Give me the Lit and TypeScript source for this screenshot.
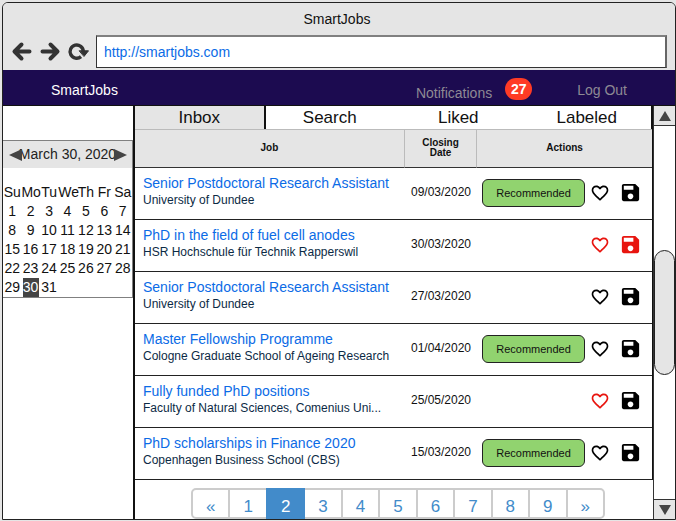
import { LitElement, html, css, svg } from "lit";
import { customElement, property, state } from "lit/decorators.js";
import { classMap } from "lit/directives/class-map.js";

interface Job {
  title: string;
  place: string;
  closing: string;
  recommended: boolean;
  liked: boolean;
  saved: boolean;
}

const JOBS: Job[] = [
  { title: "Senior Postdoctoral Research Assistant", place: "University of Dundee", closing: "09/03/2020", recommended: true, liked: false, saved: false },
  { title: "PhD in the field of fuel cell anodes", place: "HSR Hochschule für Technik Rapperswil", closing: "30/03/2020", recommended: false, liked: true, saved: true },
  { title: "Senior Postdoctoral Research Assistant", place: "University of Dundee", closing: "27/03/2020", recommended: false, liked: false, saved: false },
  { title: "Master Fellowship Programme", place: "Cologne Graduate School of Ageing Research", closing: "01/04/2020", recommended: true, liked: false, saved: false },
  { title: "Fully funded PhD positions", place: "Faculty of Natural Sciences, Comenius Uni...", closing: "25/05/2020", recommended: false, liked: true, saved: false },
  { title: "PhD scholarships in Finance 2020", place: "Copenhagen Business School (CBS)", closing: "15/03/2020", recommended: true, liked: false, saved: false },
];

const reset = css`
  * { box-sizing: border-box; }
  button {
    font: inherit;
    color: inherit;
    background: none;
    border: 0;
    padding: 0;
    cursor: pointer;
  }
  a { text-decoration: none; color: inherit; }
  svg { display: block; }
`;

/* Browser frame: title, history buttons and address box. */
@customElement("browser-bar")
export class BrowserBar extends LitElement {
  static styles = [reset, css`
    :host { display: block; background: #e5e5e5; padding-bottom: 2px; }
    .title { height: 32px; line-height: 32px; text-align: center; padding-right: 4px; color: #111; }
    .tools { display: flex; align-items: center; padding: 0 8px; }
    .nav { width: 22px; height: 22px; margin-right: 6px; }
    .icon { width: 22px; height: 22px; fill: none; stroke: #333; stroke-width: 4; stroke-linecap: round; stroke-linejoin: round; }
    .ring { stroke-width: 3.4; stroke-linecap: butt; }
    .tip { fill: #333; stroke-width: 1; }
    .address {
      flex: 1;
      min-width: 0;
      height: 33px;
      margin-left: 1px;
      font: inherit;
      color: #0b6be6;
      border: 1px solid #333;
      border-top: 2px solid #808080;
      border-right: 2px solid #666;
      padding: 0 7px;
      background: #fff;
      outline: 0;
    }
  `];

  render() {
    return html`
      <div class="title">SmartJobs</div>
      <div class="tools">
        <button class="nav" aria-label="Back">
          <svg class="icon" viewBox="0 0 22 22">${svg`<path d="M18.5 10.500H3.500M10.500 3.500L3.500 10.500l7 7"/>`}</svg>
        </button>
        <button class="nav" aria-label="Forward">
          <svg class="icon" viewBox="0 0 22 22">${svg`<path d="M3.500 10.500h15M11.500 3.500l7 7-7 7"/>`}</svg>
        </button>
        <button class="nav" aria-label="Reload">
          <svg class="icon" viewBox="0 0 22 22">${svg`<path class="ring" d="M14 15.600A6.600 6.600 0 1 1 16.300 10.500"/><path class="tip" d="M12.500 9.800h9L17.200 15.200z"/>`}</svg>
        </button>
        <input class="address" type="text" aria-label="Address" value="http://smartjobs.com" />
      </div>
    `;
  }
}

/* Month view with the chosen day marked. */
@customElement("month-calendar")
export class MonthCalendar extends LitElement {
  @property({ type: Number }) selected = 30;

  static styles = [reset, css`
    :host { display: block; border: 1px solid #808080; border-left: 0; background: #fff; }
    .head { position: relative; height: 27px; line-height: 27px; background: #e5e5e5; text-align: center; white-space: nowrap; color: #222; }
    .step { position: absolute; top: 8px; width: 13px; height: 12px; }
    .step svg { width: 13px; height: 12px; fill: #444; }
    .prev { left: 6px; }
    .next { right: 5px; }
    .days { width: 100%; table-layout: fixed; border-collapse: collapse; margin-top: 15px; color: #111; }
    .days th, .days td { padding: 0; height: 19px; line-height: 19px; text-align: center; font-weight: normal; white-space: nowrap; }
    .day { display: block; margin: 0 auto; width: 16px; height: 19px; }
    .on { background: #444; color: #fff; }
  `];

  render() {
    const weeks = [0, 1, 2, 3, 4].map((w) => [1, 2, 3, 4, 5, 6, 7].map((d) => w * 7 + d));
    return html`
      <div class="head">
        March 30, 2020
        <button class="step prev" aria-label="Previous month"><svg viewBox="0 0 13 12">${svg`<path d="M13 0v12L0 6z"/>`}</svg></button>
        <button class="step next" aria-label="Next month"><svg viewBox="0 0 13 12">${svg`<path d="M0 0v12l13-6z"/>`}</svg></button>
      </div>
      <table class="days">
        <thead><tr>${["Su", "Mo", "Tu", "We", "Th", "Fr", "Sa"].map((d) => html`<th scope="col">${d}</th>`)}</tr></thead>
        <tbody>
          ${weeks.map((week) => html`<tr>${week.map((day) => html`<td>${day <= 31
            ? html`<button class=${classMap({ day: true, on: day === this.selected })} @click=${() => (this.selected = day)}>${day}</button>`
            : ""}</td>`)}</tr>`)}
        </tbody>
      </table>
    `;
  }
}

@customElement("job-table")
export class JobTable extends LitElement {
  @state() private jobs = JOBS;

  static styles = [reset, css`
    :host { display: block; }
    .jobs { width: 100%; table-layout: fixed; border-collapse: separate; border-spacing: 0; border-right: 1px solid #111; }
    .c-job { width: 52%; }
    .c-date { width: 14%; }
    .jobs th {
      height: 39px;
      padding: 0 16px 2px;
      background: #e5e5e5;
      border-top: 1px solid #bbb;
      border-left: 1px solid #bbb;
      border-bottom: 1px solid #333;
      font-size: 10px;
      line-height: 10px;
      color: #111;
    }
    .jobs th:first-child { border-left: 0; }
    .jobs td { height: 52px; padding: 0 0 2px; border-bottom: 1px solid #222; }
    .jobs .job { padding: 0 0 4px 8px; white-space: nowrap; }
    .name { display: block; font-size: 14px; line-height: 18px; color: #0b6be6; }
    .place { font-size: 12px; line-height: 17px; color: #0c2a45; }
    .jobs .date { padding: 0 0 4px 2px; font-size: 12px; text-align: center; color: #111; }
    .actions { display: flex; align-items: center; justify-content: flex-end; padding-right: 10px; }
    .tag { width: 103px; height: 28px; margin-right: 5px; border: 1px solid #222; border-radius: 6px; background: #91d36f; font-size: 11px; color: #111; }
    .heart svg { width: 20px; height: 20px; }
    .save { margin-left: 9px; }
    .save svg { width: 23px; height: 23px; }
    .icon { fill: #000; }
    .icon.on { fill: #e8150f; }
  `];

  private toggle(index: number, key: "liked" | "saved") {
    this.jobs = this.jobs.map((job, i) => (i === index ? { ...job, [key]: !job[key] } : job));
  }

  render() {
    return html`
      <table class="jobs">
        <colgroup><col class="c-job" /><col class="c-date" /><col /></colgroup>
        <thead>
          <tr><th scope="col">Job</th><th scope="col">Closing Date</th><th scope="col">Actions</th></tr>
        </thead>
        <tbody>
          ${this.jobs.map((job, i) => html`
            <tr>
              <td class="job"><a class="name" href="#job">${job.title}</a><div class="place">${job.place}</div></td>
              <td class="date">${job.closing}</td>
              <td>
                <div class="actions">
                  ${job.recommended ? html`<button class="tag">Recommended</button>` : ""}
                  <button class="heart" aria-label="Like" aria-pressed=${job.liked} @click=${() => this.toggle(i, "liked")}>
                    <svg class=${classMap({ icon: true, on: job.liked })} viewBox="0 0 24 24">${svg`<path d="M16.5 3c-1.74 0-3.41.81-4.5 2.09C10.91 3.81 9.24 3 7.5 3 4.42 3 2 5.42 2 8.5c0 3.78 3.4 6.86 8.55 11.54L12 21.35l1.45-1.32C18.6 15.36 22 12.28 22 8.5 22 5.42 19.58 3 16.5 3zm-4.4 15.55l-.1.1-.1-.1C7.14 14.24 4 11.39 4 8.5 4 6.5 5.5 5 7.5 5c1.54 0 3.04.99 3.57 2.36h1.87C13.46 5.99 14.96 5 16.5 5c2 0 3.5 1.5 3.5 3.5 0 2.89-3.14 5.74-7.9 10.05z"/>`}</svg>
                  </button>
                  <button class="save" aria-label="Save" aria-pressed=${job.saved} @click=${() => this.toggle(i, "saved")}>
                    <svg class=${classMap({ icon: true, on: job.saved })} viewBox="0 0 24 24">${svg`<path d="M17 3H5c-1.11 0-2 .9-2 2v14c0 1.1.89 2 2 2h14c1.1 0 2-.9 2-2V7l-4-4zm-5 16c-1.66 0-3-1.34-3-3s1.34-3 3-3 3 1.34 3 3-1.34 3-3 3zm3-10H5V5h10v4z"/>`}</svg>
                  </button>
                </div>
              </td>
            </tr>`)}
        </tbody>
      </table>
    `;
  }
}

@customElement("app-root")
export class AppRoot extends LitElement {
  @state() private tab = "Inbox";
  @state() private page = "2";

  static styles = [reset, css`
    :host {
      display: flex;
      min-height: 100vh;
      padding: 2px 0 1px 2px;
      background: #e5e5e5;
      font-family: "Liberation Sans", Arial, sans-serif;
      font-size: 14px;
      box-sizing: border-box;
    }
    .window {
      flex: 1;
      min-width: 0;
      display: flex;
      flex-direction: column;
      border: 1px solid #222;
      border-radius: 6px 6px 0 0;
      overflow: hidden;
      background: #fff;
    }
    .menu { display: flex; align-items: center; height: 36px; padding: 5px 48px 0; background: #1c0b50; color: #8e8a94; border-bottom: 1px solid #111; }
    .brand { color: #fff; margin-right: auto; }
    .alerts { display: flex; align-items: center; margin-right: 45px; }
    .alert-text { padding-top: 5px; }
    .badge { width: 27px; height: 22px; margin: 0 0 3px 13px; line-height: 22px; text-align: center; border-radius: 11px; background: #ff3b25; color: #fff; font-weight: bold; }
    .body { flex: 1; display: flex; }
    .side { width: 132px; flex: none; padding-top: 34px; border-right: 2px solid #111; }
    .main { flex: 1; min-width: 0; }
    .tabs { display: flex; border-right: 2px solid #111; }
    .tab { flex: 1; height: 23px; font-size: 17px; line-height: 23px; color: #111; }
    .tab.on { background: #e5e5e5; border-right: 2px solid #111; }
    .pages { display: flex; list-style: none; margin: 8px 48px 0 56px; padding: 0; border: 2px solid #ccc; border-radius: 5px; }
    .pages li { flex: 1; border-left: 2px solid #ccc; }
    .pages li:first-child { border-left: 0; }
    .page { display: block; height: 27px; padding-top: 6px; line-height: 21px; font-size: 17px; text-align: center; color: #428bca; }
    .page.on { background: #428bca; color: #fff; height: 31px; margin: -2px; padding-top: 8px; position: relative; }
    .scroll { width: 22px; flex: none; display: flex; flex-direction: column; align-items: stretch; justify-content: space-between; border-left: 1px solid #333; }
    .arrow { height: 20px; background: #e5e5e5; display: flex; align-items: center; justify-content: center; border-bottom: 1px solid #333; }
    .arrow.down { border-bottom: 0; border-top: 1px solid #333; }
    .arrow svg { width: 12px; height: 10px; fill: #444; }
    .thumb { height: 125px; border: 1px solid #222; border-radius: 11px; background: #e5e5e5; }
  `];

  render() {
    return html`
      <div class="window">
        <browser-bar></browser-bar>
        <nav class="menu">
          <a class="brand" href="#home">SmartJobs</a>
          <a class="alerts" href="#notifications"><span class="alert-text">Notifications</span><span class="badge">27</span></a>
          <a href="#logout">Log Out</a>
        </nav>
        <div class="body">
          <aside class="side"><month-calendar></month-calendar></aside>
          <main class="main">
            <div class="tabs" role="tablist">
              ${["Inbox", "Search", "Liked", "Labeled"].map((t) => html`
                <button role="tab" aria-selected=${t === this.tab} class=${classMap({ tab: true, on: t === this.tab })} @click=${() => (this.tab = t)}>${t}</button>`)}
            </div>
            <job-table></job-table>
            <ul class="pages">
              ${["«", "1", "2", "3", "4", "5", "6", "7", "8", "9", "»"].map((p) => html`
                <li><a href="#page" class=${classMap({ page: true, on: p === this.page })} @click=${() => (this.page = p)}>${p}</a></li>`)}
            </ul>
          </main>
          <div class="scroll">
            <button class="arrow" aria-label="Scroll up"><svg viewBox="0 0 12 10">${svg`<path d="M6 0l6 10H0z"/>`}</svg></button>
            <div class="thumb"></div>
            <button class="arrow down" aria-label="Scroll down"><svg viewBox="0 0 12 10">${svg`<path d="M6 10l6-10H0z"/>`}</svg></button>
          </div>
        </div>
      </div>
    `;
  }
}
